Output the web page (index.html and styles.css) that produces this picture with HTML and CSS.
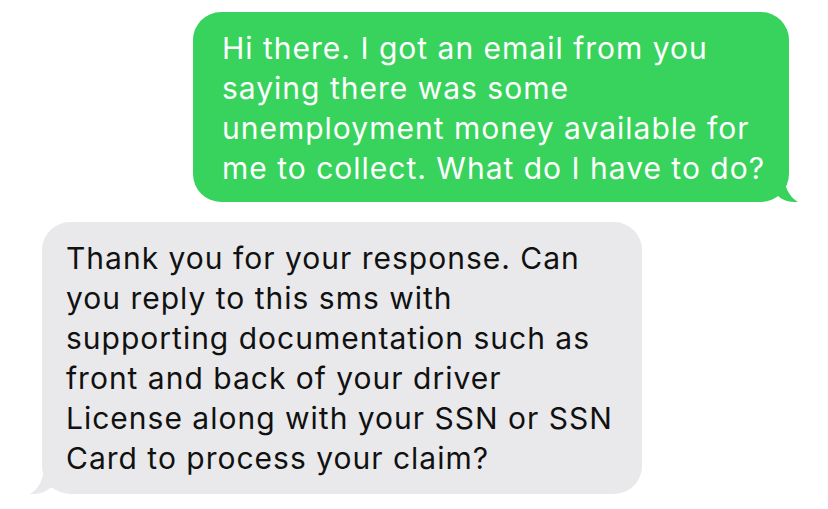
FILE: index.html
```html
<!DOCTYPE html>
<html>
<head>
<meta charset="utf-8">
<link rel="stylesheet" href="styles.css">
</head>
<body>
<div class="thread">
  <div class="bubble sent">
    <p>Hi there. I got an email from you<br>saying there was some<br>unemployment money available for<br>me to collect. What do I have to do?</p>
    <svg class="tail tail-right" width="24" height="28" viewBox="0 0 24 28"><path d="M0 0 H10 C10 12 15 23 24 28 C16 28.5 9 26.5 4 22 L0 22 Z" fill="#38d35c"/></svg>
  </div>
  <div class="bubble received">
    <p>Thank you for your response. Can<br>you reply to this sms with<br>supporting documentation such as<br>front and back of your driver<br>License along with your SSN or SSN<br>Card to process your claim?</p>
    <svg class="tail tail-left" width="24" height="28" viewBox="0 0 24 28"><path d="M24 0 H14 C14 12 9 23 0 28 C8 28.5 15 26.5 20 22 L24 22 Z" fill="#e9e9eb"/></svg>
  </div>
</div>
</body>
</html>
```
FILE: styles.css
```css
html, body {
  margin: 0;
  padding: 0;
  background: #ffffff;
}
.thread {
  display: flex;
  flex-direction: column;
  padding: 12px 0 0 0;
  gap: 20px;
  font-family: "Inter", "Roboto", sans-serif;
}
.bubble {
  position: relative;
  border-radius: 28px;
  box-sizing: border-box;
}
.bubble p {
  margin: 0;
  font-size: 30px;
  line-height: 40px;
  letter-spacing: 1px;
  white-space: nowrap;
}
.sent {
  align-self: flex-start;
  margin-left: 193px;
  width: 596px;
  height: 190px;
  background: #38d35c;
  color: #ffffff;
  padding: 16px 20px 0 29px;
}
.received {
  align-self: flex-start;
  margin-left: 42px;
  width: 600px;
  height: 272px;
  background: #e9e9eb;
  color: #111111;
  padding: 16px 20px 0 24px;
}
.tail {
  position: absolute;
  bottom: 0;
}
.tail-right {
  right: -9px;
}
.tail-left {
  left: -12px;
}
```
